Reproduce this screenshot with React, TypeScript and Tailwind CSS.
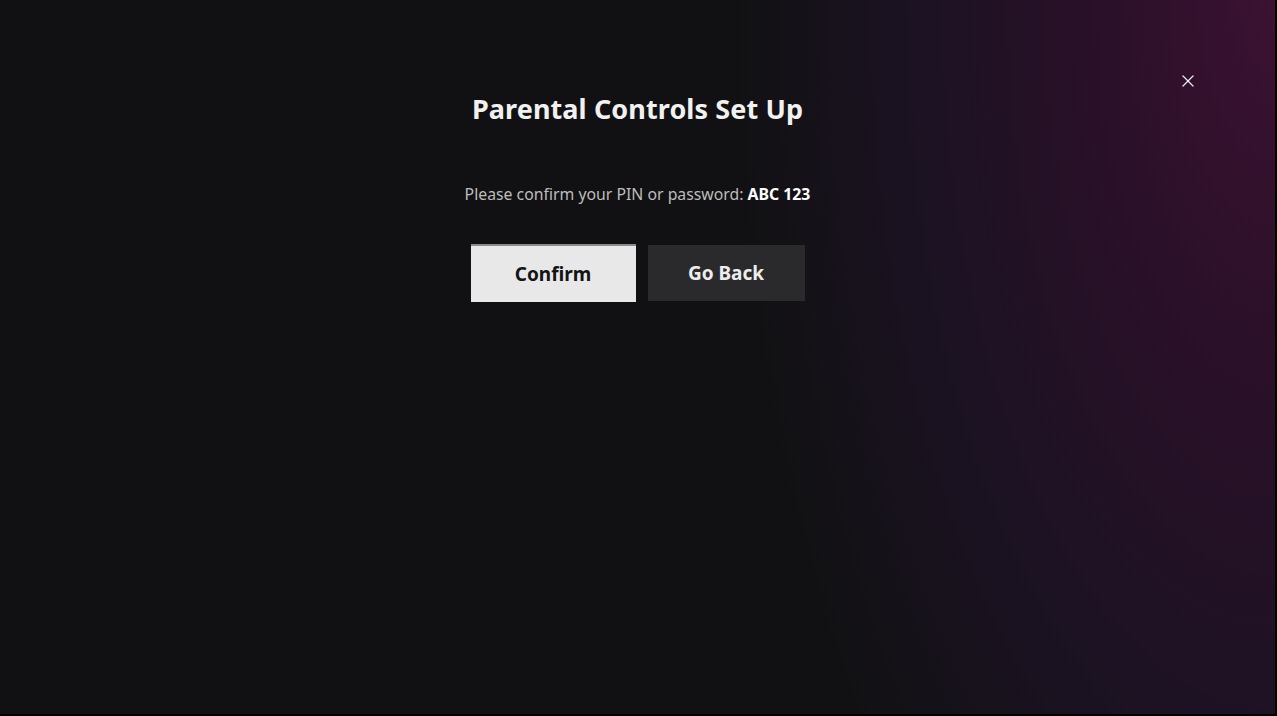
import { X } from 'lucide-react'

export default function App() {
  return (
    <div className="w-[1277px] h-[716px] bg-black pr-[2px] pb-[2px]">
      <div
        className="relative w-full h-full overflow-hidden bg-[#111113] bg-[radial-gradient(ellipse_540px_1150px_at_100%_0%,#3b1232_0%,#2b1029_30%,#1c1223_65%,rgba(17,17,19,0)_100%)]"
        style={{ fontFamily: '"Noto Sans", "Open Sans", sans-serif' }}
      >
        <button className="absolute left-[1178px] top-[71px] text-white/90">
          <X size={20} strokeWidth={1.5} />
        </button>

        <div className="flex flex-col items-center pt-[89px]">
          <h1 className="text-[27px] leading-[40px] font-bold text-[#f1f1f1] tracking-[0.1px]">
            Parental Controls Set Up
          </h1>

          <p className="mt-[53px] text-[15.8px] leading-[24px] text-[#bdbdbd]">
            Please confirm your PIN or password: <span className="font-bold text-white">ABC 123</span>
          </p>

          <div className="mt-[38px] flex items-center gap-[12px]">
            <button className="w-[165px] h-[58px] bg-[#e8e8e8] border-t-2 border-[#8a8a8a] text-[19px] font-bold text-[#141414]">
              Confirm
            </button>
            <button className="w-[157px] h-[56px] bg-[#2a2a2c] text-[19px] font-bold text-[#ededed]">
              Go Back
            </button>
          </div>
        </div>
      </div>
    </div>
  )
}
